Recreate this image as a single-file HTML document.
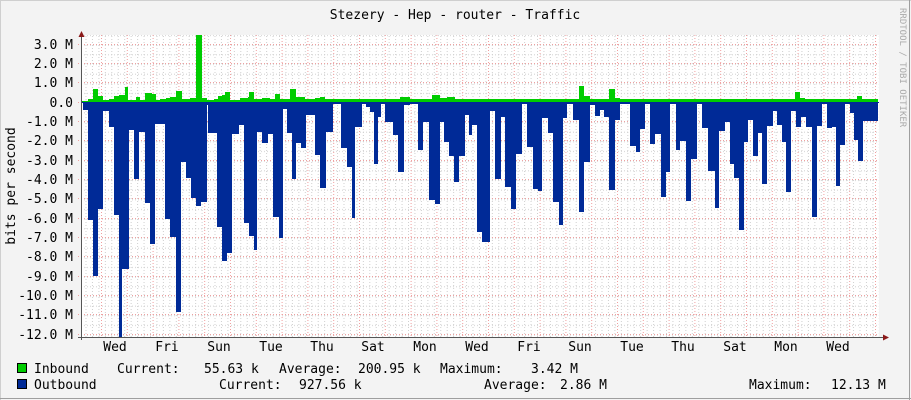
<!DOCTYPE html>
<html><head><meta charset="utf-8"><style>
html,body{margin:0;padding:0;}
body{width:911px;height:400px;overflow:hidden;background:#f3f3f3;}
svg{display:block;}
text{font-family:"DejaVu Sans Mono","Liberation Mono",monospace;font-size:13px;fill:#000;}
</style></head><body>
<svg width="911" height="400" viewBox="0 0 911 400" xmlns="http://www.w3.org/2000/svg">
<defs>
<pattern id="mh" width="6.45" height="400" patternUnits="userSpaceOnUse" x="1.65">
<line x1="0.5" y1="0" x2="0.5" y2="400" stroke="#cfcfcf" stroke-dasharray="1,2"/>
</pattern>
<pattern id="mv" width="911" height="9.665" patternUnits="userSpaceOnUse" y="0.0">
<line x1="0" y1="6.5" x2="911" y2="6.5" stroke="#cfcfcf" stroke-dasharray="1,2"/>
</pattern>
</defs>
<rect x="0" y="0" width="911" height="400" fill="#f3f3f3"/>
<line x1="0" y1="0.5" x2="911" y2="0.5" stroke="#cfcfcf"/>
<line x1="0.5" y1="0" x2="0.5" y2="400" stroke="#cfcfcf"/>
<line x1="0" y1="398.5" x2="911" y2="398.5" stroke="#9e9e9e"/>
<line x1="909.5" y1="0" x2="909.5" y2="400" stroke="#9e9e9e"/>
<rect x="81" y="35" width="798" height="302" fill="#fff"/>
<g>
<rect x="81" y="35" width="798" height="302" fill="url(#mh)"/>
<rect x="81" y="35" width="798" height="302" fill="url(#mv)"/>
</g>
<g stroke="#f0a0a0" stroke-dasharray="1,2" stroke-width="1">
<line x1="101.5" y1="35" x2="101.5" y2="337"/>
<line x1="127.3" y1="35" x2="127.3" y2="337"/>
<line x1="153.1" y1="35" x2="153.1" y2="337"/>
<line x1="178.9" y1="35" x2="178.9" y2="337"/>
<line x1="204.7" y1="35" x2="204.7" y2="337"/>
<line x1="230.5" y1="35" x2="230.5" y2="337"/>
<line x1="256.3" y1="35" x2="256.3" y2="337"/>
<line x1="282.1" y1="35" x2="282.1" y2="337"/>
<line x1="307.9" y1="35" x2="307.9" y2="337"/>
<line x1="333.7" y1="35" x2="333.7" y2="337"/>
<line x1="359.5" y1="35" x2="359.5" y2="337"/>
<line x1="385.3" y1="35" x2="385.3" y2="337"/>
<line x1="411.1" y1="35" x2="411.1" y2="337"/>
<line x1="436.9" y1="35" x2="436.9" y2="337"/>
<line x1="462.7" y1="35" x2="462.7" y2="337"/>
<line x1="488.5" y1="35" x2="488.5" y2="337"/>
<line x1="514.3" y1="35" x2="514.3" y2="337"/>
<line x1="540.1" y1="35" x2="540.1" y2="337"/>
<line x1="565.9" y1="35" x2="565.9" y2="337"/>
<line x1="591.7" y1="35" x2="591.7" y2="337"/>
<line x1="617.5" y1="35" x2="617.5" y2="337"/>
<line x1="643.3" y1="35" x2="643.3" y2="337"/>
<line x1="669.1" y1="35" x2="669.1" y2="337"/>
<line x1="694.9" y1="35" x2="694.9" y2="337"/>
<line x1="720.7" y1="35" x2="720.7" y2="337"/>
<line x1="746.5" y1="35" x2="746.5" y2="337"/>
<line x1="772.3" y1="35" x2="772.3" y2="337"/>
<line x1="798.1" y1="35" x2="798.1" y2="337"/>
<line x1="823.9" y1="35" x2="823.9" y2="337"/>
<line x1="849.7" y1="35" x2="849.7" y2="337"/>
<line x1="875.5" y1="35" x2="875.5" y2="337"/>
<line x1="78" y1="44.5" x2="879" y2="44.5"/>
<line x1="78" y1="63.5" x2="879" y2="63.5"/>
<line x1="78" y1="82.5" x2="879" y2="82.5"/>
<line x1="78" y1="102.5" x2="879" y2="102.5"/>
<line x1="78" y1="121.5" x2="879" y2="121.5"/>
<line x1="78" y1="140.5" x2="879" y2="140.5"/>
<line x1="78" y1="160.5" x2="879" y2="160.5"/>
<line x1="78" y1="179.5" x2="879" y2="179.5"/>
<line x1="78" y1="198.5" x2="879" y2="198.5"/>
<line x1="78" y1="218.5" x2="879" y2="218.5"/>
<line x1="78" y1="237.5" x2="879" y2="237.5"/>
<line x1="78" y1="256.5" x2="879" y2="256.5"/>
<line x1="78" y1="276.5" x2="879" y2="276.5"/>
<line x1="78" y1="295.5" x2="879" y2="295.5"/>
<line x1="78" y1="314.5" x2="879" y2="314.5"/>
<line x1="78" y1="334.5" x2="879" y2="334.5"/>
</g>
<path fill="#002a97" d="M81,102 H83 V110 H88 V220 H93 V276 H98 V209 H103 V111 H109 V127 H114 V215 H119 V337 H122 V269 H129 V130 H134 V179 H139 V132 H145 V203 H150 V244 H155 V124 H165 V219 H170 V237 H176 V312 H181 V162 H186 V178 H191 V198 H196 V206 H201 V202 H207 V105 H208 V133 H217 V227 H222 V261 H227 V253 H232 V134 H239 V125 H244 V223 H249 V236 H254 V250 H257 V132 H262 V143 H268 V134 H273 V217 H279 V238 H283 V109 H287 V133 H292 V179 H296 V143 H301 V148 H306 V115 H315 V155 H320 V188 H326 V132 H333 V104 H341 V148 H347 V167 H352 V218 H355 V127 H362 V104 H366 V107 H370 V112 H374 V164 H378 V117 H381 V104 H385 V122 H393 V135 H398 V172 H404 V105 H410 V104 H418 V150 H423 V122 H429 V200 H435 V204 H440 V122 H444 V142 H449 V156 H454 V182 H459 V156 H465 V115 H469 V135 H472 V125 H477 V232 H482 V242 H490 V111 H495 V179 H501 V117 H505 V187 H511 V209 H516 V154 H522 V104 H527 V147 H533 V189 H538 V191 H542 V118 H548 V133 H553 V202 H559 V225 H563 V118 H567 V104 H573 V120 H579 V212 H584 V162 H590 V105 H595 V116 H600 V110 H604 V117 H609 V190 H615 V120 H620 V104 H630 V146 H636 V152 H640 V129 H645 V104 H650 V144 H655 V134 H661 V197 H666 V172 H670 V104 H676 V150 H680 V141 H686 V201 H691 V159 H697 V104 H702 V128 H708 V171 H715 V208 H719 V131 H725 V122 H730 V164 H734 V178 H739 V230 H744 V142 H748 V120 H753 V156 H758 V133 H762 V184 H767 V126 H773 V111 H777 V125 H782 V142 H786 V192 H791 V111 H796 V127 H801 V117 H806 V127 H812 V217 H817 V126 H822 V104 H827 V128 H832 V127 H836 V186 H840 V145 H845 V104 H850 V113 H854 V140 H858 V161 H863 V121 H867 V121 H878 V102 Z"/>
<path fill="#00cc00" d="M81,102 V101 H88 V99 H93 V89 H98 V96 H103 V100 H109 V99 H114 V96 H119 V95 H125 V87 H128 V100 H136 V97 H140 V100 H145 V93 H152 V94 H156 V100 H160 V99 H166 V98 H170 V97 H176 V91 H182 V99 H190 V98 H196 V35 H202 V98 H207 V100 H214 V99 H218 V96 H222 V95 H225 V92 H230 V100 H240 V98 H248 V97 H249 V92 H254 V99 H262 V98 H270 V99 H275 V94 H280 V99 H290 V89 H296 V97 H305 V99 H315 V98 H320 V97 H325 V99 H400 V97 H410 V99 H432 V95 H440 V98 H447 V97 H455 V99 H579 V86 H584 V96 H590 V99 H609 V89 H615 V98 H620 V99 H795 V92 H800 V98 H805 V99 H857 V96 H862 V99 H878 V102 Z"/>
<line x1="81" y1="102.5" x2="879" y2="102.5" stroke="#002a97" stroke-width="1"/>
<line x1="81.5" y1="36" x2="81.5" y2="340" stroke="#555"/>
<line x1="78" y1="337.5" x2="883" y2="337.5" stroke="#555"/>
<polygon points="78.5,37 84.5,37 81.5,31" fill="#8b1a1a"/>
<polygon points="883,334.5 883,340.5 889,337.5" fill="#8b1a1a"/>
<text x="455" y="19" text-anchor="middle">Stezery - Hep - router - Traffic</text>
<g text-anchor="end">
<text x="73" y="49">3.0 M</text>
<text x="73" y="68">2.0 M</text>
<text x="73" y="87">1.0 M</text>
<text x="73" y="107">0.0</text>
<text x="73" y="126">-1.0 M</text>
<text x="73" y="145">-2.0 M</text>
<text x="73" y="165">-3.0 M</text>
<text x="73" y="184">-4.0 M</text>
<text x="73" y="203">-5.0 M</text>
<text x="73" y="223">-6.0 M</text>
<text x="73" y="242">-7.0 M</text>
<text x="73" y="261">-8.0 M</text>
<text x="73" y="281">-9.0 M</text>
<text x="73" y="300">-10.0 M</text>
<text x="73" y="319">-11.0 M</text>
<text x="73" y="339">-12.0 M</text>
</g>
<text transform="translate(15,186) rotate(-90)" text-anchor="middle">bits per second</text>
<text transform="translate(900,8) rotate(90)" style="font-size:9px;fill:#aaa">RRDTOOL / TOBI OETIKER</text>
<g text-anchor="middle">
<text x="115" y="351">Wed</text>
<text x="167" y="351">Fri</text>
<text x="219" y="351">Sun</text>
<text x="271" y="351">Tue</text>
<text x="322" y="351">Thu</text>
<text x="373" y="351">Sat</text>
<text x="425" y="351">Mon</text>
<text x="477" y="351">Wed</text>
<text x="529" y="351">Fri</text>
<text x="580" y="351">Sun</text>
<text x="632" y="351">Tue</text>
<text x="683" y="351">Thu</text>
<text x="735" y="351">Sat</text>
<text x="786" y="351">Mon</text>
<text x="838" y="351">Wed</text>
</g>
<rect x="17.5" y="363.5" width="9" height="9" fill="#00cc00" stroke="#000"/>
<rect x="17.5" y="379.5" width="9" height="9" fill="#002a97" stroke="#000"/>
<text x="34" y="373">Inbound</text>
<text x="117" y="373">Current:</text>
<text x="204" y="373">55.63 k</text>
<text x="279" y="373">Average:</text>
<text x="358" y="373">200.95 k</text>
<text x="440" y="373">Maximum:</text>
<text x="531" y="373">3.42 M</text>
<text x="34" y="389">Outbound</text>
<text x="219" y="389">Current:</text>
<text x="299" y="389">927.56 k</text>
<text x="484" y="389">Average:</text>
<text x="560" y="389">2.86 M</text>
<text x="749" y="389">Maximum:</text>
<text x="831" y="389">12.13 M</text>
</svg>
</body></html>
